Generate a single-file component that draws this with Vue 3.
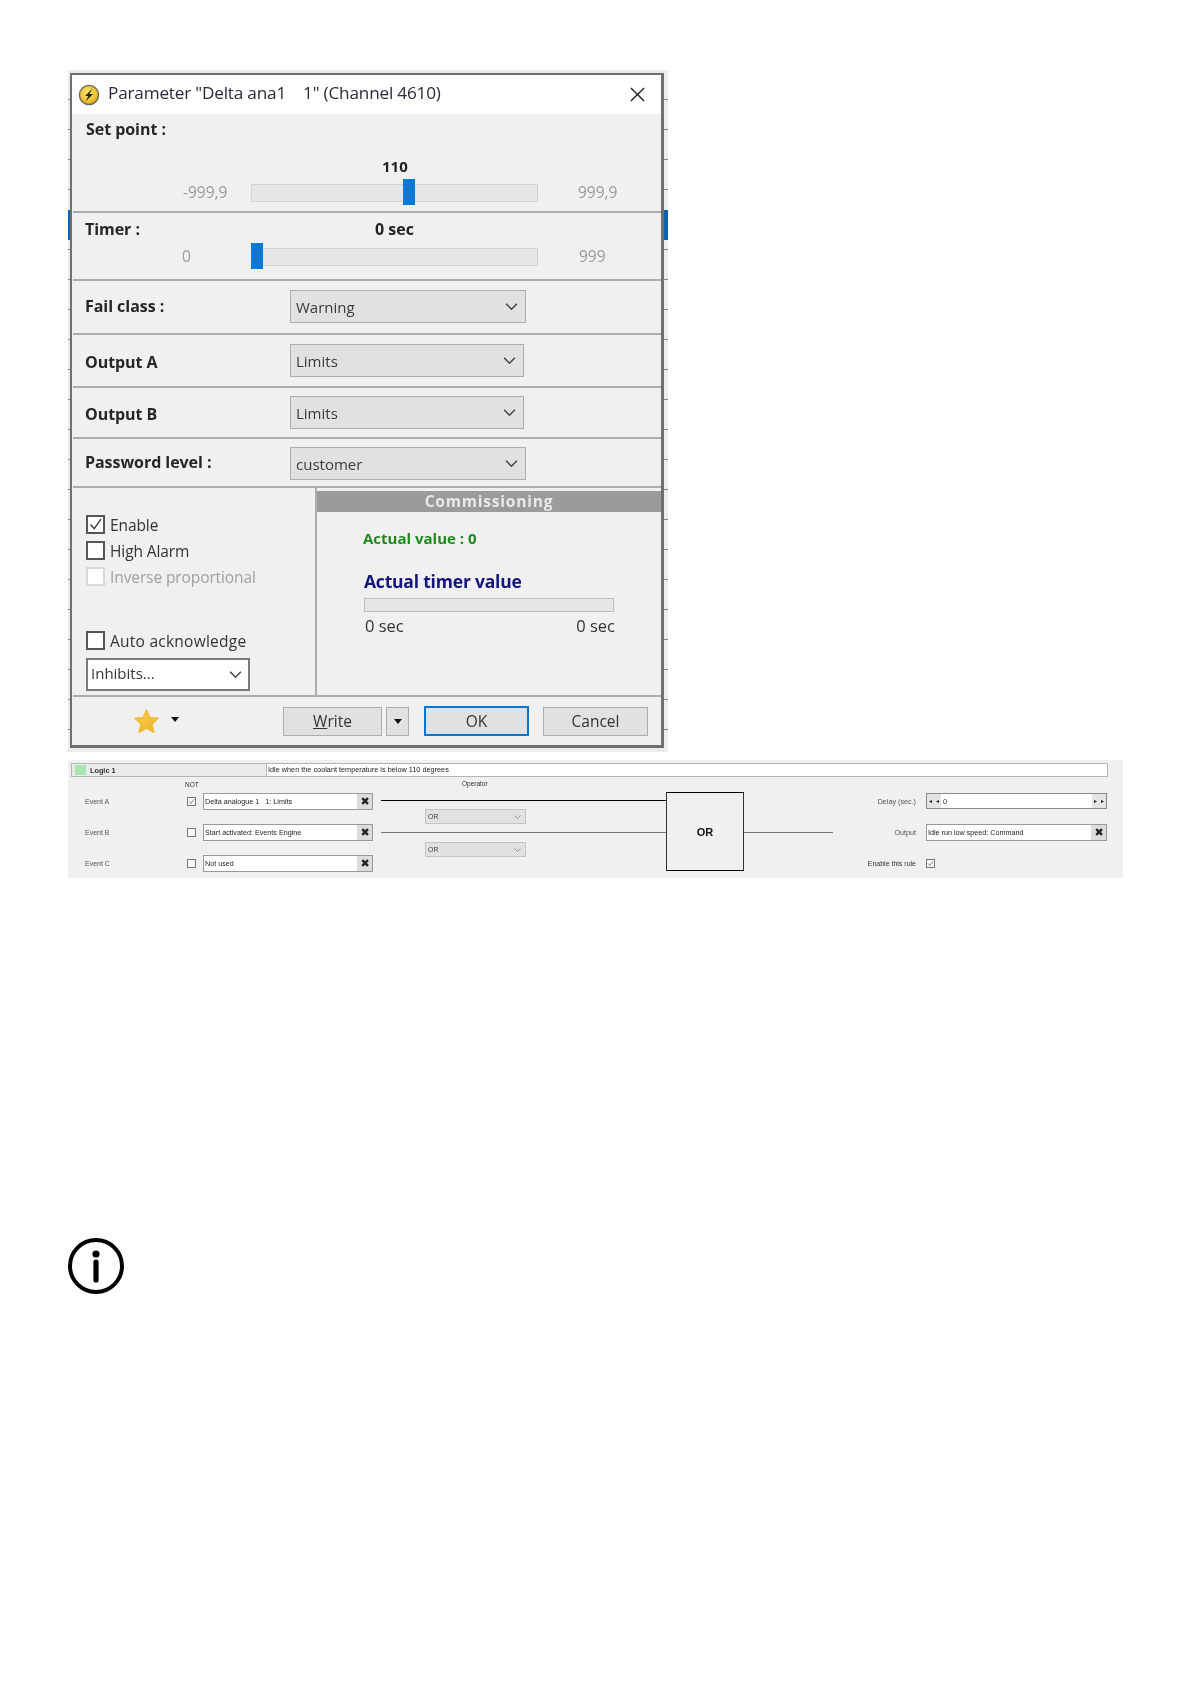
<script setup>
const selects = [
  { label: 'Fail class :', value: 'Warning', cls: 'r-fail', w: 'sel-w' },
  { label: 'Output A', value: 'Limits', cls: 'r-a', w: 'sel-n' },
  { label: 'Output B', value: 'Limits', cls: 'r-b', w: 'sel-n' },
  { label: 'Password level :', value: 'customer', cls: 'r-pw', w: 'sel-w' }
]
const events = [
  { label: 'Event A', value: 'Delta analogue 1   1: Limits', checked: true },
  { label: 'Event B', value: 'Start activated: Events Engine', checked: false },
  { label: 'Event C', value: 'Not used', checked: false }
]
</script>

<template>
  <div class="page">
    <div class="shot">
      <div class="dialog">
        <div class="title">
          <svg class="ticon" viewBox="0 0 22 22">
            <defs>
              <radialGradient id="ty" cx="45%" cy="40%" r="65%">
                <stop offset="0" stop-color="#ffe680" />
                <stop offset="0.7" stop-color="#eebf2c" />
                <stop offset="1" stop-color="#b98f1c" />
              </radialGradient>
            </defs>
            <circle cx="11" cy="11" r="9.6" fill="url(#ty)" stroke="#6f6a58" stroke-width="1.4" />
            <path d="M14.5 4.5 L7 12 H10.4 L7.6 17.6 L15 10 H11.4 Z" fill="#2a2412" />
          </svg>
          <span class="ttext">Parameter "Delta ana1&nbsp;&nbsp;&nbsp; 1" (Channel 4610)</span>
          <svg class="close" viewBox="0 0 16 16">
            <path d="M1 1 L15 15 M15 1 L1 15" stroke="#222" stroke-width="1.5" fill="none" />
          </svg>
        </div>

        <section class="sec sec-set">
          <div class="sec-label">Set point :</div>
          <div class="cur cur-set">110</div>
          <div class="slider-row">
            <span class="lim lim-l">-999,9</span>
            <div class="track"><i class="thumb thumb-mid"></i></div>
            <span class="lim lim-r">999,9</span>
          </div>
        </section>

        <section class="sec sec-timer">
          <div class="timer-head">
            <span class="sec-label">Timer :</span>
            <span class="cur cur-timer">0 sec</span>
          </div>
          <div class="slider-row slider-row2">
            <span class="lim lim-l">0</span>
            <div class="track"><i class="thumb thumb-start"></i></div>
            <span class="lim lim-r">999</span>
          </div>
        </section>

        <section v-for="s in selects" :key="s.cls" class="sec sel-row" :class="s.cls">
          <span class="sec-label sel-label">{{ s.label }}</span>
          <div class="combo" :class="s.w">
            <span>{{ s.value }}</span>
            <svg class="chev" viewBox="0 0 12 8"><path d="M1 1.5 L6 6.5 L11 1.5" fill="none" stroke="#444" stroke-width="1.4" /></svg>
          </div>
        </section>

        <section class="lower">
          <div class="lower-l">
            <label class="chk chk-1"><span class="box"><svg viewBox="0 0 18 18"><path d="M3 9 L7.5 14 L15.5 2.5" fill="none" stroke="#333" stroke-width="1.5" /></svg></span>Enable</label>
            <label class="chk chk-2"><span class="box"></span>High Alarm</label>
            <label class="chk chk-3 off"><span class="box"></span>Inverse proportional</label>
            <label class="chk chk-4"><span class="box"></span>Auto acknowledge</label>
            <div class="inhibits">
              <span class="inh-text">Inhibits...</span>
              <svg class="chev" viewBox="0 0 12 8"><path d="M1 1.5 L6 6.5 L11 1.5" fill="none" stroke="#444" stroke-width="1.4" /></svg>
            </div>
          </div>
          <div class="lower-r">
            <div class="comm">Commissioning</div>
            <div class="actual">Actual value : 0</div>
            <div class="atimer">Actual timer value</div>
            <div class="prog"></div>
            <div class="prog-lbl"><span>0 sec</span><span>0 sec</span></div>
          </div>
        </section>

        <footer class="foot">
          <svg class="star" viewBox="0 0 26 26">
            <defs>
              <linearGradient id="sg" x1="0" y1="0" x2="0.6" y2="1">
                <stop offset="0" stop-color="#f8d35a" />
                <stop offset="1" stop-color="#f0b428" />
              </linearGradient>
            </defs>
            <path d="M13 2 L16.2 9.2 L24 10 L18.2 15.2 L20 23.4 L13 19.2 L6 23.4 L7.8 15.2 L2 10 L9.8 9.2 Z" fill="url(#sg)" stroke="#f2bf3c" stroke-width="1.6" stroke-linejoin="round" />
          </svg>
          <i class="caret caret-s"></i>
          <button class="btn b-write"><u>W</u>rite</button>
          <button class="btn b-arrow"><i class="caret"></i></button>
          <button class="btn b-ok">OK</button>
          <button class="btn b-cancel">Cancel</button>
        </footer>
      </div>
    </div>

    <div class="logic">
      <div class="logic-top">
        <div class="logic-name"><i class="swatch"></i><b>Logic 1</b></div>
        <div class="logic-desc">Idle when the coolant temperature is below 110 degrees</div>
      </div>
      <div class="logic-body">
        <div class="events">
          <div class="not">NOT</div>
          <div v-for="e in events" :key="e.label" class="ev-row">
            <span class="ev-label">{{ e.label }}</span>
            <span class="cb">
              <svg v-if="e.checked" viewBox="0 0 9 9"><path d="M1.5 4.5 L3.6 7 L7.8 1.6" fill="none" stroke="#444" stroke-width="0.8" /></svg>
            </span>
            <div class="field">
              <span class="field-text">{{ e.value }}</span>
              <span class="xbtn">✖</span>
            </div>
          </div>
        </div>
        <div class="wires">
          <div class="op-label">Operator</div>
          <div class="wire wire-a"></div>
          <div class="mini mini-1"><span>OR</span><svg viewBox="0 0 12 8"><path d="M2 2 L6 6 L10 2" fill="none" stroke="#777" stroke-width="1" /></svg></div>
          <div class="wire wire-b"></div>
          <div class="mini mini-2"><span>OR</span><svg viewBox="0 0 12 8"><path d="M2 2 L6 6 L10 2" fill="none" stroke="#777" stroke-width="1" /></svg></div>
        </div>
        <div class="orbox">OR</div>
        <div class="wire-out"></div>
        <div class="right">
          <div class="r-row r-delay">
            <span class="r-label">Delay (sec.)</span>
            <div class="field delay">
              <i class="step">◂</i><i class="step">◂</i>
              <span class="delay-v">0</span>
              <i class="step">▸</i><i class="step">▸</i>
            </div>
          </div>
          <div class="r-row r-out">
            <span class="r-label">Output</span>
            <div class="field out">
              <span class="field-text">Idle run low speed: Command</span>
              <span class="xbtn">✖</span>
            </div>
          </div>
          <div class="r-row r-en">
            <span class="r-label">Enable this rule</span>
            <span class="cb"><svg viewBox="0 0 9 9"><path d="M1.5 4.5 L3.6 7 L7.8 1.6" fill="none" stroke="#444" stroke-width="0.8" /></svg></span>
          </div>
        </div>
      </div>
    </div>

    <svg class="info" viewBox="0 0 56 56">
      <circle cx="28" cy="28" r="26" fill="none" stroke="#000" stroke-width="4" />
      <circle cx="28" cy="16" r="3.6" fill="#000" />
      <path d="M28 24 V42" stroke="#000" stroke-width="5.2" stroke-linecap="round" />
    </svg>
  </div>
</template>

<style scoped>
.page { width: 1191px; height: 1684px; background: #fff; overflow: hidden; font-family: "Noto Sans", "Liberation Sans", sans-serif; color: #222; }

.shot {
  margin: 70px 0 0 68px; width: 600px; height: 682px; box-sizing: border-box;
  padding: 3px 4px 4px 2px;
  filter: blur(0.3px);
  background:
    linear-gradient(#0a63b0, #0a63b0) 0 140px / 100% 30px no-repeat,
    repeating-linear-gradient(#ececec 0 29px, #888 29px 30px);
}
.dialog {
  height: 100%; box-sizing: border-box; background: #f0f0f0;
  border: 2px solid #6f6f6f; border-right-width: 3px; border-bottom-width: 3px;
  display: flex; flex-direction: column;
}

.title { height: 39px; flex: none; background: #fff; display: flex; align-items: center; padding-left: 6px; }
.ticon { width: 22px; height: 22px; margin-top: 1px; }
.ttext { margin: 0 0 4px 8px; font-size: 17.2px; color: #2a2a3a; white-space: nowrap; font-family: "Open Sans", sans-serif; letter-spacing: -0.2px; }
.close { width: 15px; height: 15px; margin-left: auto; margin-right: 16px; }

.sec { border-bottom: 2px solid #adadad; box-sizing: border-box; flex: none; margin-left: 1px; }
.sec-label { font-weight: 700; font-size: 16px; color: #262626; font-family: "Open Sans", sans-serif; letter-spacing: -0.05px; }

.sec-set { height: 99px; padding: 4px 0 0 13px; }
.cur { font-weight: 700; font-size: 15px; color: #222; font-family: "Open Sans", sans-serif; }
.cur-set { margin: 16px 0 0 296px; line-height: 20px; }
.slider-row { display: flex; align-items: center; margin-left: 97px; margin-top: 5px; }
.lim { color: #9a9a9a; font-size: 15.5px; font-family: "Open Sans", sans-serif; margin-bottom: 1px; }
.lim-l { width: 68px; }
.lim-r { margin-left: 40px; }
.track { width: 287px; height: 18px; background: #e6e6e6; border: 1px solid #d4d4d4; box-sizing: border-box; position: relative; }
.thumb { position: absolute; top: -6px; width: 12px; height: 26px; background: #0a78d7; }
.thumb-mid { left: 151px; }
.thumb-start { left: -1px; }

.sec-timer { height: 68px; padding: 4px 0 0 12px; }
.timer-head { display: flex; align-items: center; line-height: 24px; }
.timer-head .sec-label { width: 290px; flex: none; }
.cur-timer { font-size: 16px; }
.slider-row2 { margin-left: 97px; margin-top: 4px; }
.slider-row2 .lim { margin-bottom: 1px; }
.slider-row2 .lim-l { width: 69px; }
.slider-row2 .lim-r { margin-left: 41px; }

.sel-row { display: flex; align-items: center; padding-left: 12px; }
.sel-label { width: 205px; flex: none; }
.r-fail { height: 54px; }
.r-fail .sel-label { margin-bottom: 3px; }
.r-fail .combo { margin-bottom: 1px; }
.r-a { height: 53px; }
.r-a .sel-label { margin-top: 2px; }
.r-b { height: 51px; }
.r-b .sel-label { margin-top: 3px; }
.r-pw { height: 49px; }
.r-pw .combo { margin-top: 2px; }
.r-pw .sel-label { margin-bottom: 1px; }
.combo {
  height: 33px; box-sizing: border-box; background: #e1e1e1; border: 1px solid #adadad;
  display: flex; align-items: center; justify-content: space-between; padding: 0 7px 0 5px;
  font-size: 15px; color: #3a3a3a; font-family: "Open Sans", sans-serif;
}
.sel-w { width: 236px; }
.sel-n { width: 234px; }
.chev { width: 13px; height: 9px; }

.lower { flex: 1; min-height: 0; display: flex; border-bottom: 2px solid #adadad; margin-left: 1px; }
.lower-l { width: 244px; flex: none; box-sizing: border-box; border-right: 2px solid #adadad; padding: 27px 0 0 13px; display: flex; flex-direction: column; }
.chk { display: flex; align-items: center; font-size: 15.5px; color: #333; gap: 5px; height: 19px; font-family: "Open Sans", sans-serif; letter-spacing: -0.1px; white-space: nowrap; }
.box { width: 19px; height: 19px; box-sizing: border-box; border: 2px solid #555; background: #fff; flex: none; display: block; }
.box svg { display: block; width: 15px; height: 15px; }
.chk-2 { margin-top: 7px; }
.chk-3 { margin-top: 7px; }
.chk-4 { margin-top: 45px; letter-spacing: 0.25px; }
.off { color: #a0a0a0; }
.off .box { border-color: #d8d8d8; }
.inhibits {
  margin-top: 8px; width: 164px; height: 33px; box-sizing: border-box; background: #fff; border: 2px solid #7a7a7a;
  display: flex; align-items: center; justify-content: space-between; padding: 0 6px 0 3px; font-size: 15px; color: #333; font-family: "Open Sans", sans-serif;
}
.inh-text { margin-bottom: 4px; }
.lower-r { flex: 1; min-width: 0; padding-top: 3px; }
.comm { height: 21px; background: #9b9b9b; color: #e9e9e9; font-weight: 700; font-size: 15.5px; letter-spacing: 0.8px; line-height: 20px; text-align: center; font-family: "Open Sans", sans-serif; }
.actual { margin: 16px 0 0 46px; color: #1e8a1e; font-weight: 700; font-size: 15px; line-height: 20px; font-family: "Open Sans", sans-serif; }
.atimer { margin: 21px 0 0 47px; color: #14147e; font-weight: 700; font-size: 17.5px; line-height: 24px; font-family: "Open Sans", sans-serif; letter-spacing: -0.2px; }
.prog { margin: 5px 0 0 47px; width: 250px; height: 14px; box-sizing: border-box; background: #e6e6e6; border: 1px solid #bdbdbd; }
.prog-lbl { margin: 4px 0 0 48px; width: 250px; display: flex; justify-content: space-between; font-size: 16.5px; color: #333; line-height: 20px; font-family: "Open Sans", sans-serif; }

.foot { height: 48px; flex: none; display: flex; align-items: center; margin-left: 1px; }
.star { width: 27px; height: 27px; margin-left: 60px; }
.caret { width: 0; height: 0; display: inline-block; border-left: 4.5px solid transparent; border-right: 4.5px solid transparent; border-top: 5px solid #111; }
.caret-s { margin: 0 0 4px 11px; }
.btn { height: 29px; box-sizing: border-box; background: #e1e1e1; border: 1px solid #adadad; padding: 0; font-size: 15.5px; color: #333; font-family: "Open Sans", sans-serif; display: flex; align-items: center; justify-content: center; }
.b-write { width: 99px; margin-left: 104px; }
.b-arrow { width: 23px; margin-left: 4px; }
.b-ok { width: 105px; margin-left: 15px; height: 30px; border: 2px solid #0078d7; }
.b-cancel { width: 105px; margin-left: 14px; }

.logic { margin: 8px 0 0 68px; width: 1055px; height: 118px; background: #f0f0f0; padding-top: 3px; box-sizing: border-box; font-family: "Liberation Sans", sans-serif; font-size: 7.3px; color: #333; filter: blur(0.25px); }
.logic-top { display: flex; height: 14px; margin: 0 15px 0 3px; }
.logic-name { width: 196px; flex: none; box-sizing: border-box; border: 1px solid #b4b4b4; background: #eaeaea; display: flex; align-items: center; padding-left: 3px; }
.swatch { width: 11px; height: 10px; background: #a6e6b0; margin-right: 4px; }
.logic-desc { flex: 1; box-sizing: border-box; background: #fff; border: 1px solid #b4b4b4; border-left: none; line-height: 12px; padding-left: 1px; color: #222; }
.logic-body { display: flex; height: 99px; }

.events { width: 305px; flex: none; box-sizing: border-box; padding-left: 17px; }
.not { margin-left: 100px; line-height: 15px; font-size: 6.5px; }
.ev-row { display: flex; align-items: center; height: 17px; margin-bottom: 14px; }
.ev-row:nth-child(2) { margin-top: 1px; }
.ev-label { width: 102px; flex: none; font-size: 7px; color: #555; }
.cb { width: 9px; height: 9px; box-sizing: border-box; border: 1px solid #777; background: #f6f6f6; flex: none; display: block; }
.cb svg { display: block; width: 100%; height: 100%; }
.ev-row .cb { margin-right: 7px; }
.field { width: 170px; height: 17px; box-sizing: border-box; background: #fff; border: 1px solid #999; display: flex; align-items: center; justify-content: space-between; padding-left: 1px; }
.field-text { white-space: pre; font-size: 7.2px; color: #222; }
.xbtn { width: 14px; height: 15px; background: #dcdcdc; border-left: 1px solid #ddd; font-size: 11px; line-height: 15px; text-align: center; color: #222; font-family: "DejaVu Sans", sans-serif; }

.wires { width: 285px; flex: none; margin-left: 8px; }
.op-label { padding-left: 81px; line-height: 14px; font-size: 6.5px; }
.wire { height: 1px; background: #000; }
.wire-a { margin-top: 9px; }
.wire-b { margin-top: 8px; background: #777; }
.mini { width: 101px; height: 15px; box-sizing: border-box; margin-left: 44px; background: #e1e1e1; border: 1px solid #c4c4c4; display: flex; align-items: center; justify-content: space-between; padding: 0 3px 0 2px; font-size: 7px; color: #444; }
.mini svg { width: 9px; height: 6px; }
.mini-1 { margin-top: 8px; }
.mini-2 { margin-top: 9px; }

.orbox { width: 78px; height: 79px; flex: none; box-sizing: border-box; margin-top: 15px; border: 1px solid #333; border-top-color: #000; border-bottom-color: #000; display: flex; align-items: center; justify-content: center; font-weight: 700; font-size: 11px; color: #111; }
.wire-out { width: 89px; height: 1px; flex: none; background: #777; margin-top: 55px; }

.right { flex: none; display: flex; flex-direction: column; }
.r-row { display: flex; align-items: center; height: 16px; }
.r-label { width: 83px; text-align: right; flex: none; margin-right: 10px; font-size: 7.2px; color: #555; }
.r-delay { margin-top: 16px; }
.r-out { margin-top: 15px; }
.r-en { margin-top: 15px; }
.r-en .r-label { color: #333; font-size: 7px; }
.delay, .out { width: 181px; }
.delay { height: 16px; border: 1px solid #888; justify-content: flex-start; padding-left: 0; }
.step { font-style: normal; width: 7px; height: 14px; background: #e4e4e4; font-size: 6px; line-height: 14px; text-align: center; color: #222; font-family: "DejaVu Sans", sans-serif; }
.delay-v { flex: 1; padding-left: 2px; }

.info { display: block; width: 56px; height: 56px; margin: 360px 0 0 68px; }
</style>
